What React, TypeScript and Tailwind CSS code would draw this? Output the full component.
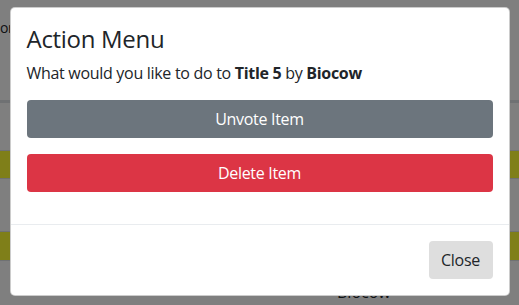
import React from 'react';

const font = { fontFamily: '"Open Sans", "Noto Sans", sans-serif' };

const rows = [
  { h: 'h-[48px]', bg: 'bg-white' },
  { h: 'h-[28px]', bg: 'bg-[#ffff33]' },
  { h: 'h-[53px]', bg: 'bg-white' },
  { h: 'h-[29px]', bg: 'bg-[#ffff33]' },
];

export default function App() {
  return (
    <div className="relative h-[305px] w-[519px] overflow-hidden bg-white text-[#212529]" style={font}>
      {/* page behind the modal */}
      <div className="pt-[16px]">
        <div className="h-[84px] text-[14px] leading-[24px] tracking-[-0.5px]">
          <span>ort</span>
        </div>
        <div className="border-t-[3px] border-[#dee2e6]">
          {rows.map((r, i) => (
            <div key={i} className={`${r.h} ${r.bg} border-b border-[#dee2e6]`} />
          ))}
          <div className="h-[40px] pl-[337px] pt-[19px] text-[16px] leading-[24px]">Biocow</div>
        </div>
      </div>

      {/* backdrop */}
      <div className="absolute inset-0 bg-black/50" />

      {/* modal */}
      <div className="absolute inset-0 flex justify-center pt-[7px] tracking-[-0.3px]">
        <div className="h-[289px] w-[500px] rounded-[5px] border border-black/20 bg-white">
          <div className="p-[16px]">
            <h4 className="mb-[8px] text-[24px] leading-[29px] font-normal">Action Menu</h4>
            <p className="mb-[15px] text-[16px] leading-[24px]">
              What would you like to do to <b>Title 5</b> by <b>Biocow</b>
            </p>
            <button className="mb-[16px] block h-[38px] w-full rounded-[4px] bg-[#6c757d] text-[16px] text-white">
              Unvote Item
            </button>
            <button className="mb-[16px] block h-[38px] w-full rounded-[4px] bg-[#dc3545] text-[16px] text-white">
              Delete Item
            </button>
          </div>
          <div className="flex justify-end border-t border-[#e9ecef] p-[16px]">
            <button className="h-[38px] w-[64px] rounded-[4px] bg-[#dedede] text-[16px] text-[#212529]">
              Close
            </button>
          </div>
        </div>
      </div>
    </div>
  );
}
